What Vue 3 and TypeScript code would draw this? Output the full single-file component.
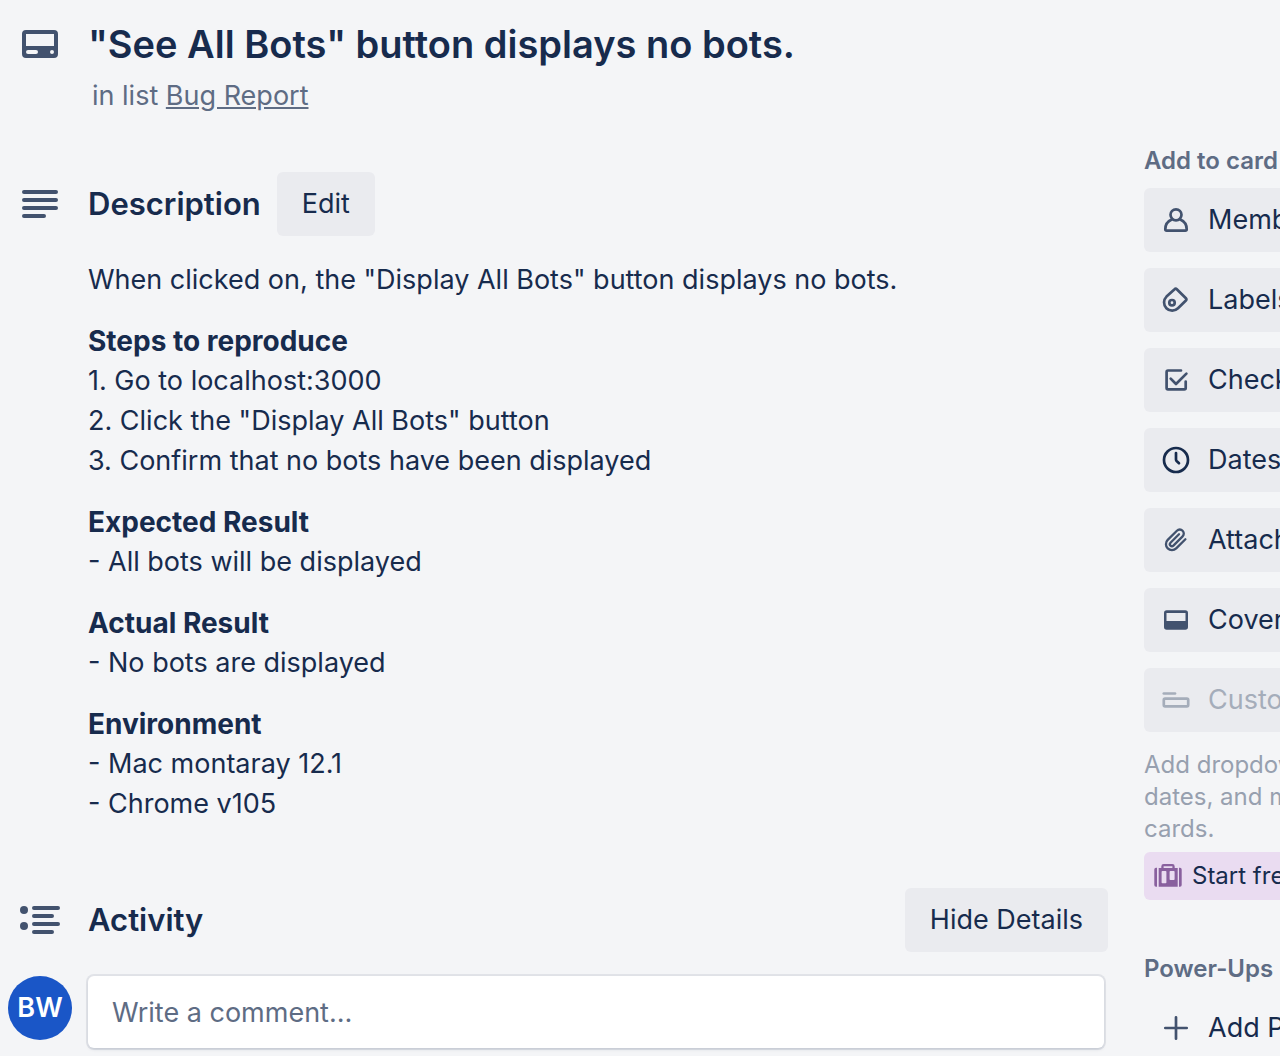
<script setup lang="ts">
import { ref } from 'vue'

interface Section {
  title?: string
  lines: string[]
}

interface Action {
  id: string
  label: string
  disabled?: boolean
}

const sections: Section[] = [
  { lines: ['When clicked on, the "Display All Bots" button displays no bots.'] },
  {
    title: 'Steps to reproduce',
    lines: [
      '1. Go to localhost:3000',
      '2. Click the "Display All Bots" button',
      '3. Confirm that no bots have been displayed',
    ],
  },
  { title: 'Expected Result', lines: ['- All bots will be displayed'] },
  { title: 'Actual Result', lines: ['- No bots are displayed'] },
  { title: 'Environment', lines: ['- Mac montaray 12.1', '- Chrome v105'] },
]

const actions: Action[] = [
  { id: 'members', label: 'Members' },
  { id: 'labels', label: 'Labels' },
  { id: 'checklist', label: 'Checklist' },
  { id: 'dates', label: 'Dates' },
  { id: 'attachment', label: 'Attachment' },
  { id: 'cover', label: 'Cover' },
  { id: 'custom', label: 'Custom Fields', disabled: true },
]

const comment = ref('')
</script>

<template>
  <div class="card">
    <header class="row card-header">
      <svg class="icon" viewBox="0 0 24 24" aria-hidden="true">
        <path fill-rule="evenodd" d="M5 5h14a2 2 0 0 1 2 2v10a2 2 0 0 1-2 2H5a2 2 0 0 1-2-2V7a2 2 0 0 1 2-2zM5 7v6h14V7zM6 15a1 1 0 0 0 0 2h4a1 1 0 0 0 0-2zM18 15a1 1 0 0 0 0 2a1 1 0 0 0 0-2z" />
      </svg>
      <div>
        <h1>"See All Bots" button displays no bots.</h1>
        <p class="in-list">in list <a href="#">Bug Report</a></p>
      </div>
    </header>

    <div class="columns">
      <main>
        <section class="description">
          <div class="row heading">
            <svg class="icon" viewBox="0 0 24 24" aria-hidden="true">
              <path class="bars" d="M4 6h16M4 10h16M4 14h16M4 18h10" />
            </svg>
            <h2>Description</h2>
            <button type="button" class="btn edit">Edit</button>
          </div>
          <div class="body">
            <p v-for="(section, i) in sections" :key="i">
              <strong v-if="section.title">{{ section.title }}</strong>
              <span v-for="line in section.lines" :key="line">{{ line }}</span>
            </p>
          </div>
        </section>

        <section>
          <div class="row heading">
            <svg class="icon" viewBox="0 0 24 24" aria-hidden="true">
              <circle cx="4" cy="7" r="2" /><circle cx="4" cy="15" r="2" />
              <path class="bars" d="M9 6h12M9 10h9M9 14h12M9 18h9" />
            </svg>
            <h2>Activity</h2>
            <button type="button" class="btn hide">Hide Details</button>
          </div>
          <div class="comment">
            <span class="avatar">BW</span>
            <input v-model="comment" type="text" aria-label="Write a comment" placeholder="Write a comment…" />
          </div>
        </section>
      </main>

      <aside>
        <div class="side">
          <h3>Add to card</h3>
          <div class="actions">
            <button v-for="a in actions" :key="a.id" type="button" class="btn action" :disabled="a.disabled">
              <svg class="glyph" :class="a.id" viewBox="0 0 32 32" aria-hidden="true">
                <template v-if="a.id === 'members'">
                  <circle cx="16" cy="10.8" r="5.5" />
                  <path d="M11.8 15.6C7.8 17.3 5.3 21 5.3 25.2q0 1.4 1.4 1.4h18.6q1.4 0 1.4-1.4C26.7 21 24.2 17.3 20.2 15.6" />
                </template>
                <template v-else-if="a.id === 'labels'">
                  <path d="M14.6 5.2L6.5 12.6A8.2 8.2 0 0 0 18 24.3L25.9 16.5Q27 15.4 25.9 14.3L16.8 5.2Q15.7 4.1 14.6 5.2Z" />
                  <circle cx="12" cy="18.7" r="2.7" />
                </template>
                <template v-else-if="a.id === 'checklist'">
                  <path d="M21 6.5H8Q6.6 6.5 6.6 7.9V24Q6.6 25.4 8 25.4H24.3Q25.7 25.4 25.7 24V17.6" />
                  <path d="M10.7 14.6L16 20L26.4 9.6" />
                </template>
                <template v-else-if="a.id === 'dates'">
                  <circle cx="16" cy="16" r="12" />
                  <path d="M16 9V15.6Q16 16.4 16.6 17L19 19.2" />
                </template>
                <path v-else-if="a.id === 'attachment'" d="M25.4 15.2l-9.2 9.2a6 6 0 0 1-8.5-8.5l9.2-9.2a4 4 0 0 1 5.7 5.7l-9.2 9.2a2 2 0 0 1-2.9-2.9l8.5-8.4" />
                <path v-else-if="a.id === 'cover'" class="solid" fill-rule="evenodd" d="M6.7 6.3h18.6A2.7 2.7 0 0 1 28 9v14a2.7 2.7 0 0 1-2.7 2.7H6.7A2.7 2.7 0 0 1 4 23V9a2.7 2.7 0 0 1 2.7-2.7zM6.5 9v8h19V9z" />
                <template v-else>
                  <path d="M3.8 9.5H15" />
                  <rect x="3.8" y="14.7" width="24.4" height="7.6" rx="1.3" />
                </template>
              </svg>
              {{ a.label }}
            </button>
          </div>
          <p class="hint">Add dropdowns, text fields, dates, and more to your cards.</p>
          <button type="button" class="trial">
            <svg class="case" viewBox="0 0 32 32" aria-hidden="true">
              <path fill-rule="evenodd" d="M5 7.7V26.7H4A1.7 1.7 0 0 1 2.3 25V9.4A1.7 1.7 0 0 1 4 7.7zM27 7.7h1a1.7 1.7 0 0 1 1.7 1.7V25A1.7 1.7 0 0 1 28 26.7H27zM6.7 8H9.3V6.4A2.4 2.4 0 0 1 11.7 4h8.6a2.4 2.4 0 0 1 2.4 2.4V8h3V26.7h-19zM11.6 6.2V8h8.8V6.2zM10.4 11a.8.8 0 0 0-.8.8v10.6a.8.8 0 0 0 .8.8h3.2a.8.8 0 0 0 .8-.8V11.8a.8.8 0 0 0-.8-.8zM18.4 11a.8.8 0 0 0-.8.8v7.4a.8.8 0 0 0 .8.8h3.4a.8.8 0 0 0 .8-.8v-7.4a.8.8 0 0 0-.8-.8z" />
            </svg>
            Start free trial
          </button>
          <h3 class="power">Power-Ups</h3>
          <button type="button" class="btn action plain">
            <svg class="glyph" viewBox="0 0 32 32" aria-hidden="true">
              <path d="M16 5.3V26.7M5.3 16H26.7" />
            </svg>
            Add Power-Ups
          </button>
        </div>
      </aside>
    </div>
  </div>
</template>

<style>
body {
  margin: 0;
  background: #f4f5f7;
}
</style>

<style scoped>
.card {
  box-sizing: border-box;
  height: 100vh;
  overflow: hidden;
  padding-top: 20px;
  background: #f4f5f7;
  color: #172b4d;
  font-family: Inter, "Liberation Sans", sans-serif;
  font-size: 27px;
  line-height: 40px;
}
h1, h2, h3, p {
  margin: 0;
}
.row {
  display: flex;
}
.icon {
  flex: none;
  width: 48px;
  height: 48px;
  margin: 0 24px 0 16px;
  fill: #42526e;
}
.bars {
  stroke: #42526e;
  stroke-width: 2;
  stroke-linecap: round;
}
h1 {
  font-size: 38px;
  line-height: 48px;
  font-weight: 600;
}
.in-list {
  margin: 8px 4px 0;
  color: #5e6c84;
}
.in-list a {
  color: inherit;
}
.columns {
  display: flex;
  gap: 36px;
  margin-top: 28px;
}
main {
  flex: 1;
  min-width: 0;
  padding-top: 28px;
}
.heading {
  align-items: center;
}
h2 {
  font-size: 31px;
  font-weight: 600;
}
.btn {
  height: 64px;
  padding: 0 25px;
  border: 0;
  border-radius: 6px;
  background: #eaebef;
  color: #172b4d;
  font: inherit;
  white-space: nowrap;
}
.edit {
  margin-left: 16px;
}
.hide {
  margin-left: auto;
}
.body {
  display: flex;
  flex-direction: column;
  gap: 21px;
  padding: 24px 0 64px 88px;
}
.body strong,
.body span {
  display: block;
}
.body strong {
  font-size: 28px;
  font-weight: 700;
}
.comment {
  display: flex;
  gap: 16px;
  padding: 24px 4px 8px 8px;
}
.avatar {
  flex: none;
  width: 64px;
  height: 64px;
  border-radius: 50%;
  background: #1a56c7;
  color: #fff;
  font-weight: 600;
  line-height: 64px;
  text-align: center;
}
input {
  flex: 1;
  min-width: 0;
  box-sizing: border-box;
  height: 72px;
  padding: 0 24px;
  border: 0;
  border-radius: 6px;
  background: #fff;
  box-shadow: 0 2px 4px -2px #091e4240, 0 0 0 2px #091e4214;
  color: #172b4d;
  font: inherit;
}
input::placeholder {
  color: #5e6c84;
  opacity: 1;
}
aside {
  flex: none;
  width: 136px;
  overflow: hidden;
}
.side {
  width: 336px;
}
h3 {
  color: #5e6c84;
  font-size: 24px;
  line-height: 34px;
  font-weight: 600;
}
.actions {
  display: flex;
  flex-direction: column;
  gap: 16px;
  margin-top: 10px;
}
.action {
  display: flex;
  align-items: center;
  gap: 16px;
  width: 100%;
  padding: 0 16px;
}
.action:disabled {
  color: #a5adba;
}
.glyph {
  flex: none;
  width: 32px;
  height: 32px;
  fill: none;
  stroke: #42526e;
  stroke-width: 2.7;
  stroke-linecap: round;
  stroke-linejoin: round;
}
.glyph.attachment {
  stroke-width: 2.3;
}
.glyph.dates {
  stroke: #172b4d;
}
.glyph.custom {
  stroke: #a5adba;
}
.solid {
  fill: #42526e;
  stroke: none;
}
.hint {
  margin: 17px 0 7px;
  color: #97a0af;
  font-size: 24px;
  line-height: 32px;
}
.trial {
  display: flex;
  align-items: center;
  gap: 8px;
  width: 100%;
  height: 48px;
  padding: 0 8px;
  border: 0;
  border-radius: 6px;
  background: #eadcf1;
  color: #172b4d;
  font: inherit;
  font-size: 24px;
}
.case {
  flex: none;
  width: 32px;
  height: 32px;
  fill: #89609e;
}
.power {
  margin: 52px 0 10px;
}
.plain {
  background: transparent;
}
</style>
